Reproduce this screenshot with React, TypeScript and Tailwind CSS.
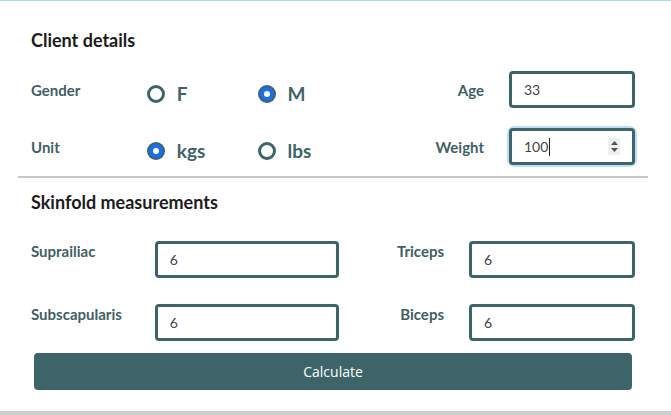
import React from 'react'

const teal = 'border-[#3c6469]'
const label = 'text-[15px] font-bold leading-[20px] text-[#3f5f65]'

function Radio({ checked, label }: { checked: boolean; label: string }) {
  return (
    <div className="flex items-center gap-[12px] pt-[8px]">
      {checked ? (
        <span className="flex h-[18px] w-[18px] items-center justify-center rounded-full bg-[#3c6469]">
          <span className="flex h-[14px] w-[14px] items-center justify-center rounded-full bg-[#1a6ef5]">
            <span className="h-[6px] w-[6px] rounded-full bg-white" />
          </span>
        </span>
      ) : (
        <span className="h-[18px] w-[18px] rounded-full border-[3px] border-[#3c6469] bg-white" />
      )}
      <span className="text-[19px] font-bold leading-none text-[#3c6469]">{label}</span>
    </div>
  )
}

function Field({ value, w }: { value: string; w: string }) {
  return (
    <div className={`flex h-[37px] ${w} items-center rounded-[4px] border-[3px] ${teal} bg-white pl-[12px] text-[14px] text-[#444]`}>
      {value}
    </div>
  )
}

export default function App() {
  return (
    <div className="bg-white font-['Lato',sans-serif]">
      <div className="h-px bg-[#a4dcee]" />
      <div className="mx-[18px] w-[630px]">
        <div className="px-[13px]">
          <h2 className="mt-[29px] text-[18px] font-bold leading-[20px] text-[#1c1c1c]">Client details</h2>

          <div className="mt-[21px] flex h-[37px] items-center">
            <div className={`w-[116px] ${label}`}>Gender</div>
            <div className="w-[111px]"><Radio checked={false} label="F" /></div>
            <div className="w-[100px]"><Radio checked label="M" /></div>
            <div className={`w-[127px] text-right ${label}`}>Age</div>
            <div className="ml-[25px]"><Field value="33" w="w-[126px]" /></div>
          </div>

          <div className="mt-[20px] flex h-[37px] items-center">
            <div className={`w-[116px] ${label}`}>Unit</div>
            <div className="w-[111px]"><Radio checked label="kgs" /></div>
            <div className="w-[100px]"><Radio checked={false} label="lbs" /></div>
            <div className={`w-[127px] text-right ${label}`}>Weight</div>
            <div className="ml-[25px] rounded-[6px] shadow-[0_0_0_2px_#bcdcff]">
              <div className={`relative flex h-[37px] w-[126px] items-center rounded-[4px] border-[3px] ${teal} bg-white pl-[12px] text-[14px] text-[#444]`}>
                100<span className="ml-px h-[18px] w-px bg-[#222]" />
                <div className="absolute right-[12px] top-[7px] flex h-[17px] w-[12px] flex-col items-center justify-center gap-[3px] bg-[#efefef]">
                  <svg width="7" height="4" viewBox="0 0 7 4"><path d="M0 4 L3.5 0 L7 4 Z" fill="#555" /></svg>
                  <svg width="7" height="4" viewBox="0 0 7 4"><path d="M0 0 L3.5 4 L7 0 Z" fill="#555" /></svg>
                </div>
              </div>
            </div>
          </div>
        </div>

        <div className="mt-[11px] h-[2px] bg-[#c8c8c8]" />

        <div className="px-[13px]">
          <h2 className="mt-[14px] text-[18px] font-bold leading-[20px] text-[#1c1c1c]">Skinfold measurements</h2>

          <div className="mt-[29px] flex items-start">
            <div className={`w-[124px] ${label}`}>Suprailiac</div>
            <Field value="6" w="w-[185px]" />
            <div className={`w-[105px] text-right ${label}`}>Triceps</div>
            <div className="ml-[25px]"><Field value="6" w="w-[166px]" /></div>
          </div>

          <div className="mt-[26px] flex items-start">
            <div className={`w-[124px] ${label}`}>Subscapularis</div>
            <Field value="6" w="w-[185px]" />
            <div className={`w-[105px] text-right ${label}`}>Biceps</div>
            <div className="ml-[25px]"><Field value="6" w="w-[166px]" /></div>
          </div>
        </div>

        <button className="mx-[16px] mt-[12px] flex h-[37px] w-[598px] items-center justify-center rounded-[4px] bg-[#3c6469] font-['Open_Sans',sans-serif] text-[14px] text-white">
          Calculate
        </button>
      </div>
      <div className="mt-[21px] h-[8px] bg-[#cfcfcf]" />
    </div>
  )
}
